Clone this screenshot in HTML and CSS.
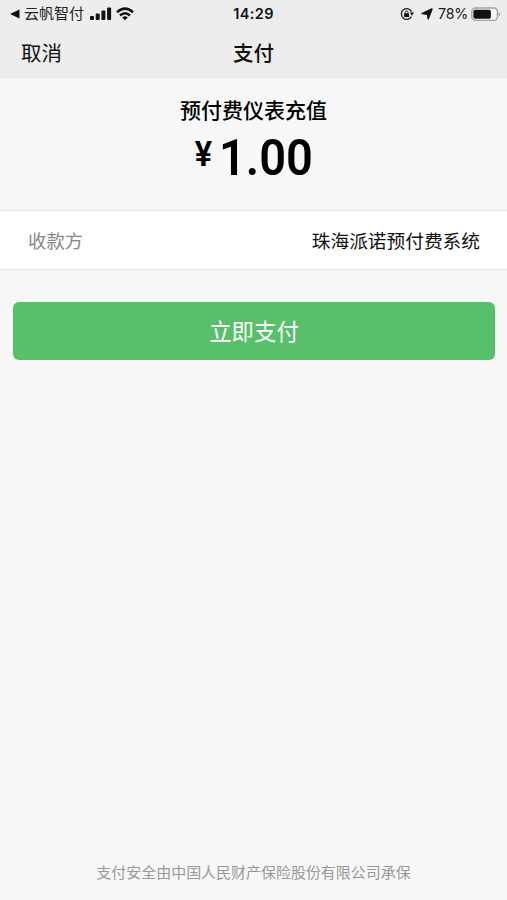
FILE: index.html
```html
<!DOCTYPE html>
<html lang="zh-CN">
<head>
<meta charset="utf-8">
<title>支付</title>
<link rel="stylesheet" href="styles.css">
</head>
<body>
<header class="top">
  <div class="status">
    <div class="status-left">
      <svg class="back" width="10" height="10" viewBox="0 0 10 10"><path d="M0 5 9.5 0.5v9z"/></svg>
      <span class="app">云帆智付</span>
      <svg class="signal" width="22" height="14" viewBox="0 0 22 14"><rect x="0" y="9" width="4" height="4" rx="1"/><rect x="5.7" y="6.5" width="4" height="6.5" rx="1"/><rect x="11.4" y="3.6" width="4" height="9.4" rx="1"/><rect x="17.1" y="0.5" width="4" height="12.5" rx="1"/></svg>
      <svg class="wifi" width="18" height="14" viewBox="0 0 18 14"><g fill="none" stroke="#111" stroke-width="2.6"><path d="M1 5.2Q9-2 17 5.2"/><path d="M4 8.5Q9 4 14 8.5"/></g><path d="M6.2 10.4Q9 8.2 11.8 10.4L9 13.2z"/></svg>
    </div>
    <span class="time">14:29</span>
    <div class="status-right">
      <svg class="lock" width="14" height="14" viewBox="0 0 14 14"><path d="M11.4 9.7A5.4 5.4 0 1 1 11.7 4.8" fill="none" stroke="#222" stroke-width="1.3"/><path d="M9.9 5.4h4.1L12 8.8z"/><rect x="4.1" y="6.3" width="5" height="3.7" rx=".5"/><path d="M5.2 6.5V5.3a1.4 1.4 0 0 1 2.8 0v1.2" fill="none" stroke="#222"/></svg>
      <svg class="arrow" width="12" height="12" viewBox="0 0 12 12"><path d="M11 1 7.2 10.8 6.6 6.2 1 5.6z" stroke="#111" stroke-width="1.5" stroke-linejoin="round"/></svg>
      <span class="percent">78%</span>
      <svg class="battery" width="30" height="15" viewBox="0 0 30 15"><rect x=".8" y="1" width="25.6" height="12.4" rx="3.6" fill="#f5f5f5" stroke="#a2a2a2" stroke-width="1.4"/><rect x="2.4" y="2.7" width="17.5" height="9" rx="1.8"/><path d="M27.6 4.9q3.2 2.3 0 4.6z" fill="#a2a2a2"/></svg>
    </div>
  </div>
  <nav class="nav">
    <span class="cancel">取消</span>
    <h1 class="title">支付</h1>
  </nav>
</header>
<main class="main">
  <section class="summary">
    <p class="item">预付费仪表充值</p>
    <p class="amount"><span class="yen">¥</span><span class="value">1.00</span></p>
  </section>
  <section class="payee">
    <span class="label">收款方</span>
    <span class="name">珠海派诺预付费系统</span>
  </section>
  <button class="pay">立即支付</button>
</main>
<footer class="footer">支付安全由中国人民财产保险股份有限公司承保</footer>
</body>
</html>
```
FILE: styles.css
```css
* { box-sizing: border-box; }
body {
  margin: 0;
  height: 900px;
  display: flex;
  flex-direction: column;
  background: #f7f7f7;
  color: #111;
  font-family: "Noto Sans CJK SC", sans-serif;
  overflow: hidden;
}
svg { display: block; flex: none; fill: #111; }
p, h1 { margin: 0; }
.top { height: 78px; background: #ededed; }
.status {
  height: 28px;
  display: grid;
  grid-template-columns: 1fr auto 1fr;
  align-items: center;
  font-family: Inter, "Noto Sans CJK SC", sans-serif;
  font-size: 14.5px;
  line-height: 28px;
}
.status-left, .status-right { display: flex; align-items: center; }
.status-left { padding-left: 10px; }
.app { margin-left: 4px; font-size: 15px; color: #222; }
.signal { margin-left: 6px; }
.wifi { margin-left: 4px; }
.time { font-weight: 600; letter-spacing: .4px; }
.status-right { justify-content: flex-end; padding-right: 6px; }
.arrow { margin-left: 7px; }
.percent { margin-left: 5px; color: #222; font-size: 14.2px; letter-spacing: -.2px; }
.battery { margin-left: 3px; }
.nav {
  height: 48px;
  display: grid;
  grid-template-columns: 1fr auto 1fr;
  align-items: center;
  line-height: 48px;
  font-size: 20.5px;
}
.cancel { padding-left: 21px; }
.title { font-size: 20.5px; font-weight: 500; }
.summary { height: 132px; padding-top: 16px; text-align: center; color: #000; }
.item { font-size: 21px; font-weight: 500; line-height: 30px; }
.amount {
  display: flex;
  justify-content: center;
  padding-left: 3px;
  font-family: Roboto, sans-serif;
  font-weight: 600;
}
.yen { font-size: 35px; line-height: 62px; margin-right: 3px; transform: scaleX(.93); }
.value { font-size: 50px; line-height: 68px; transform: scaleX(.94); }
.payee {
  height: 60px;
  padding: 0 27px 2px 28px;
  display: flex;
  align-items: center;
  justify-content: space-between;
  background: #fff;
  border-top: 1px solid #e7e7e7;
  border-bottom: 1px solid #e7e7e7;
  font-size: 18.7px;
}
.label { color: #888; font-size: 18.4px; padding-top: 2px; }
.pay {
  display: block;
  width: 482px;
  height: 58px;
  margin: 32px 0 0 13px;
  padding: 0 0 2px;
  border: 0;
  border-radius: 6px;
  background: #58c06b;
  color: #fff;
  font: 400 22.4px/56px "Noto Sans CJK SC", sans-serif;
}
.footer {
  margin-top: auto;
  height: 56px;
  line-height: 56px;
  text-align: center;
  font-size: 14.97px;
  color: #999;
}
```
